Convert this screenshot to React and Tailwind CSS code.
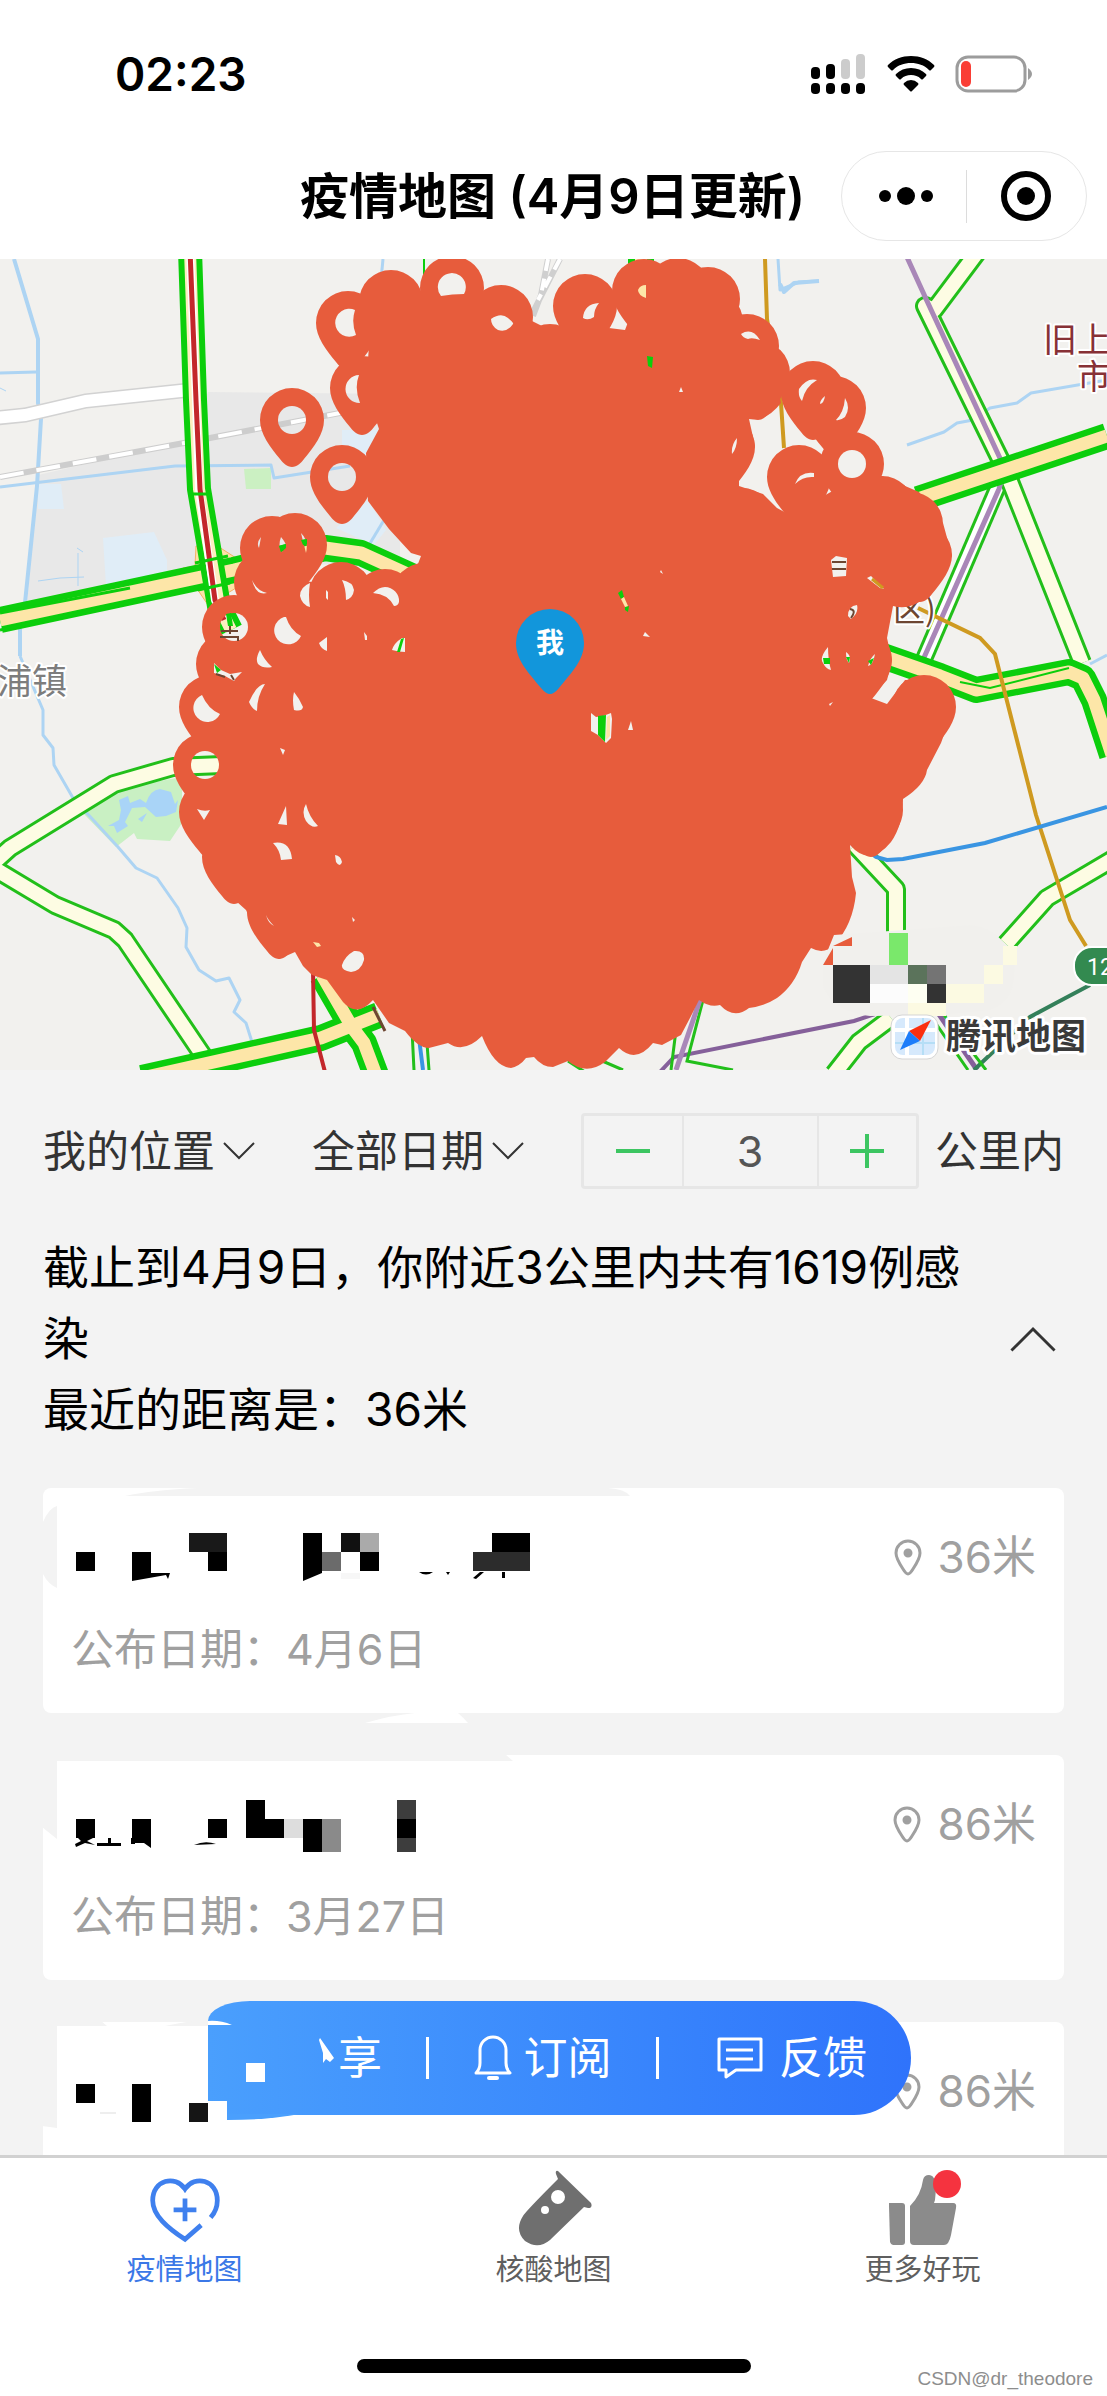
import React, { useState } from 'react';
import clsx from 'clsx';

const PIN = 'M0 47C-5 47-9 43-12 39C-22 27-32 14-32 0A32 32 0 1 1 32 0C32 14 22 27 12 39C9 43 5 47 0 47Z';

// Marker centres along the rim of the cluster
const PINS = [
  [348, 323], [391, 302], [452, 288], [501, 317], [550, 356], [585, 306], [644, 291], [678, 290],
  [708, 299], [711, 322], [747, 346], [758, 373], [813, 393], [834, 408], [852, 464], [799, 477],
  [362, 388], [292, 420], [342, 477], [295, 545], [272, 548], [266, 582], [341, 594], [385, 601],
  [234, 627], [228, 664], [211, 707], [205, 765], [211, 812], [234, 857], [279, 912], [723, 447],
  [882, 508], [911, 524], [920, 555], [924, 707], [908, 735], [871, 810], [860, 660], [742, 520],
  [424, 595], [448, 585], [288, 625], [320, 660]
];

const CLUSTER =
  'M379 429L366 453L368 501L389 529L411 553L421 556L416 569L416 600L300 580L240 600L215 690L205 800L215 862L227 893L246 910' +
  'L260 940L279 959L295 952L303 966L312 975L327 980L343 1002Q357 1018 373 1000L389 1023L405 1031Q418 1048 429 1048L448 1043Q464 1054 482 1036' +
  'Q494 1067 511 1068Q520 1066 526 1058L534 1057Q542 1067 553 1067L568 1061Q586 1076 605 1062L619 1048Q636 1064 653 1043L662 1045L681 1035' +
  'L690 1018L699 1000Q710 1008 720 1005Q734 1020 749 1008Q765 1006 777 998Q795 985 802 962L811 948Q824 955 834 945Q853 925 856 893L852 877L850 845' +
  'Q870 868 891 842Q903 825 903 799Q925 785 927 770L941 743L953 710L928 680L905 680L887 704L871 698L887 680L892 660L887 638L893 606Q915 612 935 588' +
  'L952 556L943 523L919 492L882 476L852 480L790 515L777 508L763 494L739 486L739 478L755 446L749 419Q766 422 781 403L775 370L745 330L700 290L644 280' +
  'L625 330L585 325L550 330L500 305L452 298L391 290L370 330L366 390Z';

const HOLES =
  'M355 310A14 14 0 1 0 356 335Q351 322 355 310Z M441 296A14 14 0 1 1 464 294Q452 294 441 296Z M491 319Q501 312 508 318Q514 323 513 324Q507 333 498 330Q491 326 491 319Z ' +
  'M359 375A14 14 0 0 0 360 403Q354 388 359 375Z M261 537Q256 543 259 548Q260 543 261 537Z M281 537Q286 543 286 546Q284 551 281 552Q278 545 281 537Z ' +
  'M301 533Q309 541 306 553Q304 545 301 533Z M252 580Q257 591 267 593Q256 596 252 580Z M310 583Q300 587 300 596Q302 605 310 607Q308 595 310 583Z M326 590L328 592L328 600L326 598Z ' +
  'M342 580Q353 582 354 590Q353 598 346 600Q346 588 342 580Z M373 593Q379 587 385 587A14 14 0 0 1 399 602Q398 606 394 606Q388 594 373 593Z M284 617A14 14 0 1 0 301 636Q290 630 286 617Z ' +
  'M327 637L319 643Q321 649 327 651Z M364 632L367 636V640H365Z M402 638Q394 643 392 650Q399 652 405 652V638Z M260 650Q255 659 258 664Q263 669 272 667Q264 660 260 650Z ' +
  'M214 663L221 670L230 674L242 672L236 678L234 681L225 676L214 673Z M202 695A14 14 0 1 0 220 714Q208 709 202 695Z M265 684Q257 684 249 702Q252 709 257 711Q257 696 265 684Z ' +
  'M294 692Q299 698 303 707Q302 712 294 710Q292 700 294 692Z M280 748L285 750L283 755Z M197 809Q204 812 210 810L204 820Z M286 806L287 825L278 824Z M306 804Q301 812 306 821Q312 829 318 826Q309 817 306 804Z ' +
  'M273 843Q290 840 292 859L281 860Q280 850 273 843Z M335 855Q341 856 342 862Q340 868 336 862Z M266 915Q268 923 274 926Q268 920 266 915Z M352 917L355 920L353 922Z M354 951Q365 950 364 960Q361 971 351 972Q341 970 342 965Q345 956 354 951Z ' +
  'M599 303Q584 304 583 318Q588 321 594 317Q594 309 599 303Z M681 387L683 392L679 392Z M741 334Q752 327 760 340Q752 337 748 339Q743 338 741 334Z M817 380Q807 377 799 389Q798 397 802 401Q805 387 817 380Z ' +
  'M825 396Q820 400 820 404Q824 403 825 396Z M845 398Q851 408 845 417Q840 421 836 420Q844 412 845 398Z M737 438Q731 445 732 454Q737 448 737 438Z M795 484Q800 471 814 473L814 477Q803 476 795 484Z ' +
  'M831 560L836 556L847 558L846 576L833 577Z M867 578L871 576L884 589L880 588Z M848 616Q848 606 857 605Q859 613 851 619Z M645 632L650 637L643 636Z M661 570L663 574L660 572Z ' +
  'M828 647Q819 658 823 663Q826 669 831 670Q828 660 828 647Z M846 652Q852 656 849 663Q846 660 846 652Z M875 654Q870 658 868 666Q873 665 875 654Z ' +
  'M591 713L596 717L603 716L611 713L612 719L611 738L606 743L598 735L591 731Z M631 721L633 730H628Z M829 704L833 702L830 706Z';

const HIGHWAYS = [
  '0,620 234,570 325,548 361,553 416,578 440,590',
  '918,499 1107,436',
  '880,655 940,676 976,690 1069,672 1083,678 1094,700 1112,755',
  '142,1078 321,1038 379,1015',
  '322,975 352,1027 364,1043 376,1075'
];

const STREETS = [
  '979,250 934,310 925,306 1005,469 1082,663',
  '222,765 173,767 114,784 10,848 -10,866 55,905 114,930 125,940 204,1057',
  '855,845 896,889 896,933',
  '1115,858 1047,898 1006,944',
  '891,1018 859,1042 834,1074'
];

const WATER = [
  '14,259 38,339 38,403 41,419 37,486 25,603 20,629 20,656',
  '20,656 43,710 43,735 53,748 54,765 73,798 118,847 136,868 157,878 178,908 187,928 186,947 199,970 216,981 229,978 240,1000 234,1012 246,1023 252,1042',
  '0,373 36,372',
  '0,487 175,466 271,465 274,478 350,466',
  '778,259 780,290 799,282 819,281',
  '907,445 944,432 957,423 973,420 990,408 1017,403 1031,393 1107,380',
  '383,259 381,280',
  '366,550 384,520',
  '1090,664 1107,655'
];

const MOSAIC = [
  [833, 965, 37, 38, '#333333'], [870, 965, 38, 19, '#e4e4e4'], [870, 984, 38, 19, '#fcfcfc'], [908, 984, 19, 19, '#fefff2'],
  [908, 965, 19, 19, '#5b735b'], [927, 965, 19, 19, '#747474'], [927, 984, 19, 19, '#333333'], [889, 933, 19, 32, '#7ae86b'],
  [946, 984, 38, 19, '#fcfae2'], [984, 965, 19, 19, '#fcfae2'], [1003, 946, 14, 19, '#fcfae2'], [908, 1003, 38, 13, '#fcfae2']
];

const CASES = [
  {
    id: 1,
    distance: '36米',
    date: '4月6日',
    blocks: [
      [1, 19, 19, 19, '#000'], [57, 19, 19, 21, '#000'], [114, 0, 38, 19, '#191919'], [133, 19, 19, 19, '#000'],
      [228, 0, 19, 40, '#000'], [266, 0, 19, 19, '#111'], [285, 0, 19, 19, '#aaa'], [247, 19, 19, 19, '#6b6b6b'],
      [285, 19, 19, 19, '#000'], [417, 0, 38, 19, '#000'], [398, 19, 57, 19, '#2c2c2c'], [266, 40, 19, 6, '#f7f7f7']
    ],
    scraps: 'M57 40H95L93 46L91 42L57 48Z M228 40H247L228 48Z M344 39H358Q351 44 344 39Z M371 39H375L373 42Z M398 45L405 39H409L401 46Z M427 39H430V45H427Z',
    notch: 'M82 8Q110 2 155 0H565Q582 1 587 8Z M0 34Q6 20 14 18V100Q5 96 0 86Z'
  },
  {
    id: 2,
    distance: '86米',
    date: '3月27日',
    blocks: [
      [1, 19, 19, 19, '#000'], [57, 19, 19, 24, '#000'], [133, 19, 19, 19, '#000'], [171, 0, 19, 38, '#000'],
      [190, 19, 19, 19, '#000'], [209, 19, 19, 19, '#ddd'], [228, 19, 19, 33, '#000'], [247, 19, 19, 33, '#8a8a8a'],
      [322, 0, 19, 52, '#3d3d3d'], [322, 19, 19, 19, '#000']
    ],
    scraps: 'M0 44L6 41L3 38H18L12 41L20 45L10 43L1 47Z M22 43H33V38H36V43H46V46H22Z M56 38H60V44H56Z M62 38H76V48Z M119 45Q130 40 141 44Z',
    notch: 'M-1 -1H462L470 6H14V84L-1 72Z'
  },
  {
    id: 3,
    distance: '86米',
    blocks: [
      [1, 17, 19, 19, '#000'], [57, 17, 19, 38, '#000'], [114, 36, 19, 19, '#151515'], [25, 45, 16, 2, '#eee']
    ],
    scraps: '',
    notch: 'M-1 -1H58L64 4H14V106L-1 104Z M122 4Q150 -2 165 -1V4Z'
  }
];

function RoadLines({ points, edge, fill, width, inner }) {
  return (
    <g fill="none" strokeLinejoin="round">
      {points.map((p) => <polyline key={p} points={p} stroke={edge} strokeWidth={width} />)}
      {points.map((p) => <polyline key={p} points={p} stroke={fill} strokeWidth={inner} />)}
    </g>
  );
}

function CaseMap() {
  return (
    <svg viewBox="0 259 1107 811" preserveAspectRatio="xMidYMid slice" className="block w-full" role="img" aria-label="腾讯地图">
      <defs>
        <mask id="cluster" maskUnits="userSpaceOnUse" x="0" y="200" width="1107" height="900">
          <g fill="white">
            <path d={CLUSTER} />
            {PINS.map(([x, y]) => <path key={`${x}-${y}`} d={PIN} transform={`translate(${x} ${y})`} />)}
          </g>
          <g fill="black">
            <circle cx="292" cy="420" r="14" />
            <circle cx="342" cy="477" r="14" />
            <circle cx="234" cy="627" r="14" />
            <circle cx="205" cy="765" r="14" />
            <circle cx="852" cy="464" r="14" />
            <path d={HOLES} />
          </g>
        </mask>
      </defs>
      <rect x="0" y="259" width="1107" height="811" fill="#f2f1ee" />

      {/* Land use */}
      <path d="M208 392L400 394V560L234 570L27 605L38 475L190 440Z" fill="#e8e8e8" />
      <path d="M38 484H61L64 509H38Z M103 538L154 532L167 560V578L106 586Z M342 430H378L366 456L342 450Z M368 500L386 530L374 545L336 528Z" fill="#e0edf7" />
      <path d="M244 469L271 468V489L246 489Z" fill="#cbf0c2" />
      <path d="M82 812L121 788L182 777V823L170 841L137 839L134 833L116 847Z" fill="#c9f0c3" />
      <path d="M119 800L128 796L130 803L140 799L146 803Q150 790 160 789L171 792L175 804L178 800L176 812L166 816L156 817L145 807L132 808L125 822L128 826L117 833L114 826L108 826L119 820L121 810Z M138 819L147 813L142 822Z" fill="#a9d4f7" />
      <g fill="none" stroke="#add4f3" strokeLinejoin="round">
        {WATER.map((p, i) => <polyline key={p} points={p} strokeWidth={i === 0 ? 4 : 3} />)}
        <path d="M78 553V586M38 581L60 578L84 577M0 388L6 391M77 548L83 552" strokeWidth="1" />
        <path d="M780 284L784 292L794 283L819 281" strokeWidth="4" />
      </g>

      {/* Roads and railway */}
      <polyline points="-4,418 25,415 86,401 190,390" fill="none" stroke="#d2d2d2" strokeWidth="15" />
      <polyline points="-4,418 25,415 86,401 190,390" fill="none" stroke="#fff" strokeWidth="12" />
      <polyline points="0,477 184,443 345,412" fill="none" stroke="#cdcdcd" strokeWidth="6" />
      <polyline points="0,477 184,443 345,412" fill="none" stroke="#fff" strokeWidth="4" strokeDasharray="24 13" />
      <path d="M548 259L541 295L533 316M560 259L533 312" fill="none" stroke="#cfcfcf" strokeWidth="6" />
      <path d="M548 259L541 295M560 259L538 300" fill="none" stroke="#fff" strokeWidth="4" strokeDasharray="12 8" />
      <path d="M195 566L183 568L208 605L236 588V558L219 547L196 546Z" fill="#fde2a8" stroke="#f6b266" strokeWidth="1" />
      <polyline points="765,259 767,319 781,403 784,448" fill="none" stroke="#cf9a20" strokeWidth="4" />

      <RoadLines points={['999,484 918,673']} edge="#22bf1a" fill="#fff" width={18} inner={12} />
      <RoadLines points={STREETS} edge="#22bf1a" fill="#fdfce3" width={20} inner={14} />
      <g fill="none" stroke="#a987b8" strokeWidth="5">
        <polyline points="906,255 927,301 1005,469 999,489 914,680" />
      </g>
      <RoadLines points={HIGHWAYS} edge="#0cce0c" fill="#fde6a8" width={26} inner={13} />
      <path d="M0 630L140 600M0 613L130 588" stroke="#0cce0c" strokeWidth="3" />
      <RoadLines points={['190,250 195,400 199,489 219,606 231,630']} edge="#0cce0c" fill="#fdeec0" width={24} inner={12} />
      <polyline points="190,250 196,400 199,489 215,600 224,620" fill="none" stroke="#fff" strokeWidth="8" />
      <polyline points="190,250 196,400 200,489 215,600 224,620" fill="none" stroke="#c3272b" strokeWidth="5" />
      <path d="M192 494H208M195 563L228 556M198 590L230 583" stroke="#0cce0c" strokeWidth="3" />
      <path d="M629 259H653V290H629Z M424 259V280" fill="#0cce0c" stroke="#0cce0c" strokeWidth="2" />
      <path d="M635 259H647V290H635Z" fill="#fde6a8" />
      <path d="M960 682L990 688L1069 668" fill="none" stroke="#0cce0c" strokeWidth="2" />
      <polyline points="918,608 980,638 995,654 1036,815 1070,920 1086,946" fill="none" stroke="#cf9a20" strokeWidth="4" />
      <polyline points="860,845 876,857 887,860 903,859 985,843 1107,807" fill="none" stroke="#3a95e2" strokeWidth="4" />
      <polyline points="313,970 314,1030 325,1072" fill="none" stroke="#c3272b" strokeWidth="4" />
      <path d="M412 1030L414 1070M426 1030L429 1070" stroke="#22bf1a" strokeWidth="3" />
      <path d="M418 1030L423 1070" stroke="#3a95e2" strokeWidth="4" />
      <path d="M373 1007L385 1031" stroke="#6d4632" strokeWidth="3" />
      <polyline points="875,1014 854,1021 674,1057 660,1072" fill="none" stroke="#85609a" strokeWidth="4" />
      <path d="M936 1010L977 1070" stroke="#85609a" strokeWidth="5" />
      <polyline points="1090,985 1056,1003 1030,1017 974,1070" fill="none" stroke="#34805a" strokeWidth="4" />
      <path d="M930 1015L968 1070M944 1015L986 1070M703 1000L687 1061L733 1070M676 1030L671 1070M568 1061L585 1072M600 1060L623 1070" fill="none" stroke="#22bf1a" strokeWidth="3" />
      <path d="M700 1000L676 1070" stroke="#a987b8" strokeWidth="5" />

      {/* Place names */}
      <g fontFamily="'Noto Sans CJK SC', sans-serif" paintOrder="stroke" stroke="#fff" strokeWidth="4" strokeLinejoin="round">
        <text x="1043" y="352" fontSize="34" fill="#873136">旧上</text>
        <text x="1077" y="389" fontSize="34" fill="#873136">市</text>
        <text x="-3" y="694" fontSize="35" fill="#7d7d7d">浦镇</text>
        <text x="893" y="621" fontSize="32" fill="#6d4632">区)</text>
      </g>

      <rect x="0" y="259" width="1107" height="811" fill="#e75c3c" mask="url(#cluster)" />

      {/* Slivers of road between markers */}
      <path d="M647 356L653 357L652 368L648 366Z M618 593L622 590L624 597L621 599Z M625 607L629 606L628 612L625 610Z M598 716L606 715L605 742L598 735Z M401 639L404 638L400 652H397Z M279 546L286 544V548L281 552Z M823 658H830V664H824Z M846 657H850L849 663Z M868 661L874 658L871 665Z M226 614L231 613L233 626H228Z M214 664L221 670L217 673Z M301 540L307 539V544L303 545Z" fill="#0cce0c" />
      <path d="M646 285V298Q638 295 638 290Q640 285 646 285Z M621 599L624 597L628 606L625 607Z M313 942L319 943L321 946L317 947Z M607 717L610 715V736L606 740Z" fill="#fde6a8" />
      <path d="M832 562H846M832 569H846M221 631H238M220 637H238V641M230 626V634M216 674L225 677M231 675L234 680M850 609Q857 610 851 618" fill="none" stroke="#6d4632" strokeWidth="2" />
      <path d="M872 579L883 588" stroke="#cf9a20" strokeWidth="3" />

      {/* User marker */}
      <path d="M550 694Q546 694 541 688C528 672 516 660 516 643A34 34 0 1 1 584 643C584 660 572 672 559 688Q554 694 550 694Z" fill="#1296db" />
      <text x="550" y="653" fontSize="28" fontWeight="700" textAnchor="middle" fill="#fff" fontFamily="'Noto Sans CJK SC', sans-serif">我</text>

      {/* Pixelated label */}
      <path d="M834 935L960 926Q985 922 1000 940L1014 960Q1018 1000 990 1010L940 1015L870 1016Q833 1012 823 985V962Z" fill="#f1f0ed" />
      <path d="M833 946L852 937V946Z M823 965L833 948V965Z" fill="#e75c3c" />
      {MOSAIC.map(([x, y, w, h, fill]) => <rect key={`${x}-${y}`} x={x} y={y} width={w} height={h} fill={fill} />)}

      <rect x="1074" y="947" width="60" height="38" rx="18" fill="#338a50" stroke="#fff" strokeWidth="2" />
      <text x="1087" y="975" fontSize="23" fill="#fff" fontFamily="Roboto, sans-serif">12</text>

      <rect x="891" y="1015" width="47" height="44" rx="11" fill="#fff" stroke="#d5d5d5" strokeWidth="1" />
      <rect x="895" y="1018" width="40" height="37" rx="8" fill="#d6e9fc" />
      <path d="M907 1018V1055M895 1030H935" stroke="#fff" strokeWidth="4" />
      <path d="M923 1018V1055M895 1043H935" stroke="#b5def6" strokeWidth="2" />
      <path d="M931 1020L920 1041L909 1031Z" fill="#fb2f10" />
      <path d="M900 1050L909 1031L920 1041Z" fill="#1d7dfa" />
      <text x="946" y="1049" fontSize="35" fontWeight="700" fill="#3a3a3a" stroke="#fff" strokeWidth="6" strokeLinejoin="round" paintOrder="stroke" fontFamily="'Noto Sans CJK SC', sans-serif">腾讯地图</text>
    </svg>
  );
}

function StatusBar() {
  return (
    <div className="flex items-center justify-between pl-[115px] pr-[74px] h-[148px]">
      <span className="text-[46px] leading-none font-semibold text-black">02:23</span>
      <div className="flex items-center gap-5">
        <svg width="56" height="40" viewBox="0 0 56 40">
          <g fill="#000">
            <rect x="0" y="13" width="9" height="12" rx="4" />
            <rect x="15" y="10" width="9" height="15" rx="4" />
            {[0, 15, 30, 45].map((x) => <rect key={x} x={x} y="29" width="9" height="11" rx="4" />)}
          </g>
          <rect x="30" y="5" width="9" height="20" rx="4" fill="#ccc" />
          <rect x="45" y="0" width="9" height="25" rx="4" fill="#ccc" />
        </svg>
        <svg width="48" height="36" viewBox="0 0 48 36">
          <path d="M24 0C33 0 41 3 47 9Q48 10 47 11L44 14Q43 15 42 14C37 9 31 7 24 7C17 7 11 9 6 14Q5 15 4 14L1 11Q0 10 1 9C7 3 15 0 24 0Z" />
          <path d="M24 12C30 12 35 14 39 18Q40 19 39 20L36 23Q35 24 34 23C31 20 28 19 24 19C20 19 17 20 14 23Q13 24 12 23L9 20Q8 19 9 18C13 14 18 12 24 12Z" />
          <path d="M24 24Q28 24 31 27Q32 28 31 29L25 35Q24 36 23 35L17 29Q16 28 17 27Q20 24 24 24Z" />
        </svg>
        <svg width="78" height="38" viewBox="0 0 78 38">
          <rect x="2" y="2" width="68" height="34" rx="11" fill="none" stroke="#9c9c9c" strokeWidth="3" />
          <rect x="6" y="6" width="10" height="26" rx="5" fill="#fa3e35" />
          <path d="M73 13Q77 16 77 19Q77 22 73 25Z" fill="#9c9c9c" />
        </svg>
      </div>
    </div>
  );
}

function Chevron({ up }) {
  return (
    <svg width={up ? 46 : 32} height={up ? 26 : 18} viewBox="0 0 32 18" className={clsx('shrink-0', up && 'rotate-180')} fill="none" stroke="#333" strokeWidth="2">
      <path d="M1 1L16 16L31 1" />
    </svg>
  );
}

function CaseCard({ item, last }) {
  return (
    <article className={clsx('relative bg-white px-7', last ? 'flex-1 rounded-t-lg' : 'h-[225px] rounded-lg')}>
      <svg className="absolute left-0 top-0 overflow-visible" width="600" height="110" aria-hidden="true">
        <path d={item.notch} fill="#f3f3f3" />
        {item.id === 1 && <path d="M322 235Q350 227 372 225H415Q421 230 425 235Z" fill="#fff" />}
      </svg>
      <div className="relative flex items-start justify-between pt-[45px]">
        <svg width="456" height="56" viewBox="0 0 456 56" className="ml-1" aria-hidden="true">
          {item.blocks.map(([x, y, w, h, fill]) => <rect key={`${x}-${y}-${h}`} x={x} y={y} width={w} height={h} fill={fill} />)}
          <path d={item.scraps} />
        </svg>
        <div className="flex items-center gap-4 h-12 text-[#a0a0a0]">
          <svg width="28" height="37" viewBox="0 0 28 37" fill="none" stroke="currentColor" strokeWidth="3">
            <path d="M14 35Q12 35 9 30C5 24 2 19 2 14A12 12 0 0 1 26 14C26 19 23 24 19 30Q16 35 14 35Z" />
            <circle cx="14" cy="14" r="3" fill="currentColor" />
          </svg>
          <span className="text-[44px] leading-none">{item.distance}</span>
        </div>
      </div>
      {item.date && <p className="mt-[30px] text-[43px] leading-[60px] text-[#a0a0a0]">公布日期：{item.date}</p>}
    </article>
  );
}

function ActionPill() {
  return (
    <div className="absolute left-[208px] right-[196px] bottom-[40px] h-[114px] flex items-center rounded-r-[57px] rounded-tl-[42px_20px] bg-linear-to-r from-[#4a9ffd] to-[#2f73fb] text-white text-[44px]">
      <svg className="absolute left-0 top-0 overflow-visible" width="180" height="120" aria-hidden="true">
        <path d="M0 20Q12 19 24 24H0Z M0 100H19V119H0Z M38 62H57V81H38Z" fill="#fff" />
        <path d="M19 113H92Q60 119 19 119Z" fill="#4a9ffd" />
        <path d="M112 37L126 57L122 61L118 58L115 62V52L111 39Z" fill="#fff" />
      </svg>
      <button type="button" aria-label="分享" className="w-[218px] pr-11 text-right leading-none">享</button>
      <span className="w-[3px] h-[42px] bg-white" />
      <button type="button" className="flex flex-1 items-center justify-center gap-3 leading-none">
        <svg width="38" height="46" viewBox="0 0 38 46" fill="none" stroke="white" strokeWidth="3" strokeLinejoin="round">
          <path d="M2 38Q6 34 6 28V15A13 13 0 0 1 32 15V28Q32 34 36 38Z" />
          <path d="M15 43H23" strokeWidth="4" strokeLinecap="round" />
        </svg>
        订阅
      </button>
      <span className="w-[3px] h-[42px] bg-white" />
      <button type="button" className="flex w-[252px] items-center justify-end gap-4 pr-[44px] leading-none">
        <svg width="46" height="42" viewBox="0 0 46 42" fill="none" stroke="white" strokeWidth="3" strokeLinejoin="round">
          <path d="M2 2H44V33H19L9 40V33H2Z" />
          <path d="M9 13H36M9 22H36" />
        </svg>
        反馈
      </button>
    </div>
  );
}

const TABS = [
  {
    label: '疫情地图',
    icon: (
      <svg width="76" height="76" viewBox="-2 -4 80 80" fill="none" stroke="#3f80ee" strokeWidth="5">
        <path d="M55 54L38 69C20 57 4 44 4 28C4 6 28 1 38 16C48 1 72 6 72 28Q72 38 65 46" />
        <path d="M38 26V50M26 38H50" />
      </svg>
    )
  },
  {
    label: '核酸地图',
    icon: (
      <svg width="76" height="76" viewBox="0 0 76 76" fill="#6f6f6f">
        <path fillRule="evenodd" d="M42 1L75 33Q77 38 72 38L68 37L34 70Q22 80 9 71Q-2 60 7 46Q9 42 42 9L40 4Q39 0 42 1ZM42 20A7 7 0 1 0 42 34A7 7 0 1 0 42 20ZM29 36A4 4 0 1 0 29 44A4 4 0 1 0 29 36Z" />
      </svg>
    )
  },
  {
    label: '更多好玩',
    badge: true,
    icon: (
      <svg width="76" height="76" viewBox="0 0 76 76" fill="#8b8b8b">
        <path d="M4 33H17Q20 33 20 36V72Q20 75 17 75H8Q6 75 5 72L4 36Z" />
        <path d="M25 36Q36 25 38 10Q39 5 44 5Q53 5 50 30L49 33H68Q72 33 71 38L66 65Q64 75 59 75H29Q25 75 25 71Z" />
      </svg>
    )
  }
];

function TabBar() {
  const [active, setActive] = useState(TABS[0].label);

  return (
    <nav className="relative bg-white border-t-[3px] border-[#d1d1d1] h-[241px]">
      <div className="flex">
        {TABS.map((tab) => (
          <button
            key={tab.label}
            type="button"
            onClick={() => setActive(tab.label)}
            className={clsx('relative flex flex-1 flex-col items-center pt-3 text-[29px] leading-10', active === tab.label ? 'text-[#3b78e7]' : 'text-[#5f5f5f]')}
          >
            <span className="relative mb-1">
              {tab.icon}
              {tab.badge && <span className="absolute right-0 top-0 size-7 rounded-full bg-[#f5333f]" />}
            </span>
            {tab.label}
          </button>
        ))}
      </div>
      <div className="absolute bottom-[23px] left-1/2 -translate-x-1/2 h-[14px] w-[394px] rounded-full bg-black" />
      <span className="absolute bottom-[5px] right-[14px] font-['Liberation_Sans'] text-[19px] leading-6 text-[#8d8d8d]">CSDN@dr_theodore</span>
    </nav>
  );
}

export default function App() {
  const [radius, setRadius] = useState(3);

  return (
    <div className="flex min-h-screen flex-col bg-[#f3f3f3] font-['Inter','Noto_Sans_CJK_SC',sans-serif]">
      <header className="bg-white">
        <StatusBar />
        <div className="flex items-center justify-end pr-5 h-[111px] pb-[15px]">
          <h1 className="pr-9 text-[49px] leading-none font-semibold text-black">疫情地图 (4月9日更新)</h1>
          <div className="flex items-center w-[246px] h-[90px] rounded-full border border-[#e6e6e6]">
            <button type="button" aria-label="更多" className="flex flex-1 justify-center pl-1">
              <svg width="56" height="20" viewBox="0 0 56 20">
                <circle cx="7" cy="10" r="6" />
                <circle cx="28" cy="10" r="9" />
                <circle cx="49" cy="10" r="6" />
              </svg>
            </button>
            <span className="w-px h-[53px] bg-[#dcdcdc]" />
            <button type="button" aria-label="关闭" className="flex flex-1 justify-center">
              <svg width="50" height="50" viewBox="0 0 50 50">
                <circle cx="25" cy="25" r="22" fill="none" stroke="#000" strokeWidth="6" />
                <circle cx="25" cy="25" r="9" />
              </svg>
            </button>
          </div>
        </div>
      </header>

      <CaseMap />

      <main className="relative flex flex-1 flex-col px-[43px] pt-[43px]">
        <div className="flex items-center justify-between text-[43px] leading-none text-[#333]">
          <button type="button" className="flex items-center gap-2">我的位置<Chevron /></button>
          <button type="button" className="flex items-center gap-2 ml-3">全部日期<Chevron /></button>
          <div className="flex items-center gap-4 ml-3">
            <div className="flex h-[76px] w-[338px] rounded border-[3px] border-[#e6e6e6]">
              <button type="button" aria-label="减少" onClick={() => setRadius(Math.max(1, radius - 1))} className="flex flex-1 items-center justify-center">
                <span className="h-1 w-[34px] bg-[#3cc561]" />
              </button>
              <input
                aria-label="公里"
                value={radius}
                onChange={(e) => setRadius(Number(e.target.value) || 1)}
                className="w-[137px] border-x-2 border-[#e6e6e6] bg-transparent text-center text-[43px] text-[#555] outline-none"
              />
              <button type="button" aria-label="增加" onClick={() => setRadius(radius + 1)} className="flex flex-1 items-center justify-center">
                <svg width="34" height="34" viewBox="0 0 34 34" stroke="#3cc561" strokeWidth="4"><path d="M17 0V34M0 17H34" /></svg>
              </button>
            </div>
            <span>公里内</span>
          </div>
        </div>

        <div className="mt-[43px] flex items-center justify-between pr-2">
          <p className="w-[932px] text-[46px] leading-[71px] text-black">
            截止到4月9日，你附近3公里内共有1619例感染<br />最近的距离是：36米
          </p>
          <button type="button" aria-label="收起"><Chevron up /></button>
        </div>

        <section className="mt-[43px] flex flex-1 flex-col gap-[42px]">
          {CASES.map((item, index) => <CaseCard key={item.id} item={item} last={index === CASES.length - 1} />)}
        </section>
        <ActionPill />
      </main>

      <TabBar />
    </div>
  );
}
